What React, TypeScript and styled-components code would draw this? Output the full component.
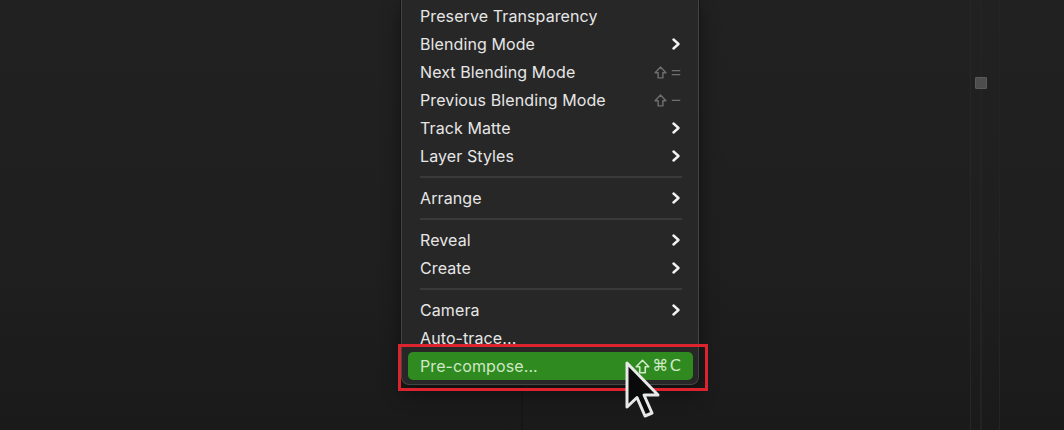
import React from "react";
import styled, { createGlobalStyle } from "styled-components";

const GlobalStyle = createGlobalStyle`
  html, body {
    margin: 0;
    padding: 0;
    background: #1e1e1e;
    overflow: hidden;
  }
`;

const Page = styled.div`
  position: relative;
  width: 1064px;
  height: 430px;
  display: grid;
  grid-template-columns: 401px 298px 1fr 30px 64px;
  align-items: start;
  background:
    linear-gradient(to right, transparent 521px, #161616 521px, #161616 523px, transparent 523px),
    linear-gradient(to bottom, #212121 0%, #1f1f1f 60%, #1a1a1a 100%);
  font-family: Inter, "Liberation Sans", sans-serif;
  overflow: hidden;
`;

const Menu = styled.div`
  grid-column: 2;
  display: flex;
  flex-direction: column;
  padding: 2px 0 4px;
  background: #272727;
  border: 1px solid #454545;
  border-top: none;
  border-radius: 0 0 8px 8px;
  box-shadow: 0 0 0 1px #141414, 0 8px 20px rgba(0, 0, 0, 0.45);
`;

const Item = styled.div<{ $active?: boolean }>`
  height: 28px;
  margin: 0 5px 0 6px;
  padding: 0 12px;
  display: flex;
  align-items: center;
  justify-content: space-between;
  border-radius: 5px;
  font-size: 16px;
  letter-spacing: 0.1px;
  color: ${(p) => (p.$active ? "#cfe8c6" : "#e6e6e6")};
  background: ${(p) => (p.$active ? "#2f8a1f" : "transparent")};
`;

const Label = styled.span`
  white-space: nowrap;
`;

const Keys = styled.span<{ $active?: boolean }>`
  display: flex;
  align-items: center;
  gap: ${(p) => (p.$active ? "2px" : "4px")};
  color: ${(p) => (p.$active ? "#cfe8c6" : "#6f6f6f")};
`;

const KeyGlyph = styled.span<{ $active?: boolean }>`
  font-family: ${(p) => (p.$active ? `"DejaVu Sans", sans-serif` : `"Liberation Sans", sans-serif`)};
  font-size: ${(p) => (p.$active ? "16px" : "17px")};
  letter-spacing: ${(p) => (p.$active ? "1.5px" : "0")};
  margin-right: ${(p) => (p.$active ? "-1.5px" : "0")};
  line-height: 1;
`;

const Separator = styled.div`
  height: 14px;
  margin: 0 16px 0 18px;
  display: flex;
  align-items: center;
  &::after {
    content: "";
    flex: 1;
    height: 2px;
    background: #3a3a3a;
  }
`;

const Rail = styled.div`
  grid-column: 4;
  height: 430px;
  border-left: 1px solid #262626;
  border-right: 1px solid #242424;
  background: linear-gradient(to right, transparent 9px, #232323 9px, #232323 11px, transparent 11px);
  box-sizing: border-box;
`;

const Thumb = styled.div`
  width: 10px;
  height: 10px;
  margin: 77px 0 0 4px;
  background: #4d4d4d;
  border: 1px solid #5a5a5a;
  border-radius: 1px;
`;

const Highlight = styled.div`
  position: absolute;
  left: 398px;
  top: 344px;
  width: 310px;
  height: 47px;
  box-sizing: border-box;
  border: 3px solid #dc2430;
  pointer-events: none;
`;

const Cursor = styled.svg`
  position: absolute;
  left: 624px;
  top: 360px;
`;

const Chevron = () => (
  <svg width="10" height="12" viewBox="0 0 10 12">
    <path d="M2.5 1.5 L7.5 6 L2.5 10.5" fill="none" stroke="#f2f2f2" strokeWidth="2.4" strokeLinecap="round" strokeLinejoin="round" />
  </svg>
);

const ShiftIcon = ({ size }: { size: number }) => (
  <svg width={size} height={size} viewBox="0 0 12 12">
    <path
      d="M6 1 L11 6.2 L8.2 6.2 L8.2 11 L3.8 11 L3.8 6.2 L1 6.2 Z"
      fill="none"
      stroke="currentColor"
      strokeWidth="1.3"
      strokeLinejoin="round"
    />
  </svg>
);

type Entry =
  | { kind: "item"; label: string; sub?: boolean; keys?: string; active?: boolean }
  | { kind: "sep" };

const entries: Entry[] = [
  { kind: "item", label: "Preserve Transparency" },
  { kind: "item", label: "Blending Mode", sub: true },
  { kind: "item", label: "Next Blending Mode", keys: "=" },
  { kind: "item", label: "Previous Blending Mode", keys: "−" },
  { kind: "item", label: "Track Matte", sub: true },
  { kind: "item", label: "Layer Styles", sub: true },
  { kind: "sep" },
  { kind: "item", label: "Arrange", sub: true },
  { kind: "sep" },
  { kind: "item", label: "Reveal", sub: true },
  { kind: "item", label: "Create", sub: true },
  { kind: "sep" },
  { kind: "item", label: "Camera", sub: true },
  { kind: "item", label: "Auto-trace..." },
  { kind: "item", label: "Pre-compose...", keys: "⌘C", active: true },
];

export default function App() {
  return (
    <>
      <GlobalStyle />
      <Page>
        <Menu>
          {entries.map((e, i) =>
            e.kind === "sep" ? (
              <Separator key={i} />
            ) : (
              <Item key={i} $active={e.active}>
                <Label>{e.label}</Label>
                {e.sub && <Chevron />}
                {e.keys && (
                  <Keys $active={e.active}>
                    <ShiftIcon size={e.active ? 15 : 13} />
                    <KeyGlyph $active={e.active}>{e.keys}</KeyGlyph>
                  </Keys>
                )}
              </Item>
            )
          )}
        </Menu>
        <Rail>
          <Thumb />
        </Rail>
        <Highlight />
        <Cursor width="40" height="62" viewBox="0 0 40 62">
          <path
            d="M3 3 L3 47 L13 37.5 L21 56 L28 53 L20 35 L34 35 Z"
            fill="#0a0a0a"
            stroke="#e8e8e8"
            strokeWidth="3"
            strokeLinejoin="round"
          />
        </Cursor>
      </Page>
    </>
  );
}
